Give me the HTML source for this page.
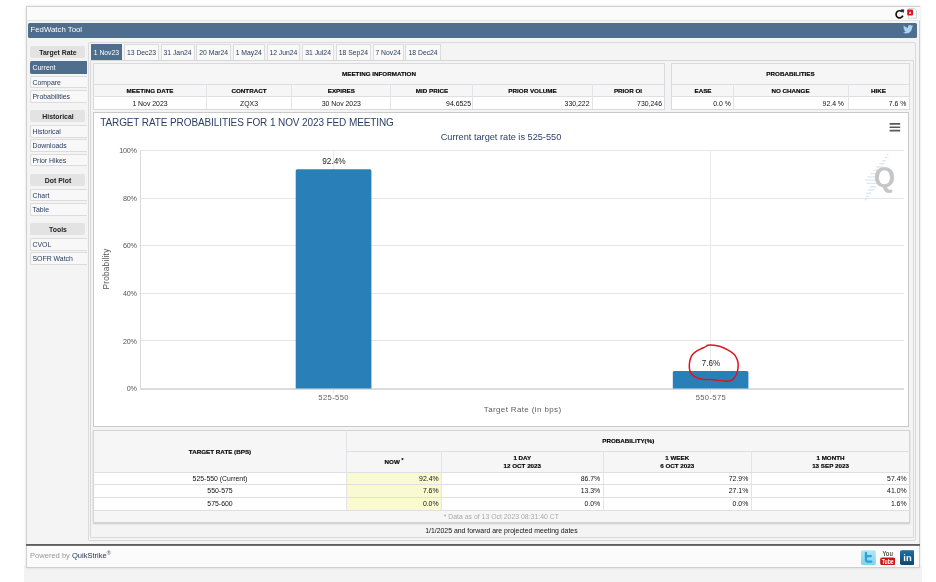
<!DOCTYPE html>
<html><head><meta charset="utf-8">
<style>
*{box-sizing:border-box;margin:0;padding:0}
html,body{width:936px;height:582px;background:#fff;overflow:hidden}
body{position:relative;font-family:"Liberation Sans",sans-serif;color:#222}
.a{position:absolute}
.t{position:absolute;white-space:nowrap;line-height:1}
.c{transform:translateX(-50%)}
.r{transform:translateX(-100%)}
.nh{position:absolute;left:30px;width:55px;height:12px;background:#e3e3e3;border-radius:2px;font-weight:bold;font-size:6.9px;text-align:center;line-height:13px;color:#222;padding-left:1px}
.ni{position:absolute;left:30px;width:57px;height:12.5px;background:#f8f8f8;border:1px solid #dcdcdc;border-right:none;border-radius:2px 0 0 2px;font-size:6.9px;line-height:11.5px;padding-left:1.5px;color:#1f3557}
.ni.on{background:#4f6d8c;border-color:#4f6d8c;color:#fff}
.tab{position:absolute;top:44px;height:15.6px;background:#f9f9f9;border:1px solid #dcdcdc;border-bottom:none;font-size:6.8px;line-height:15.5px;text-align:center;color:#1f3557;white-space:nowrap}
.tab.on{background:#4f6d8c;border-color:#4f6d8c;color:#fff}
.hl{position:absolute;background:#dedee3;height:1px}
.vl{position:absolute;background:#e3e3e8;width:1px}
.th{font-weight:bold;font-size:6.25px;color:#000;-webkit-text-stroke:.15px #000}
.td{font-size:6.9px;color:#111}
.gl{position:absolute;left:140px;width:764px;height:1px;background:#e6e6e6}
.yl{font-size:7.2px;color:#555;letter-spacing:-0.3px}
</style></head><body><div id="w" style="position:absolute;left:0;top:0;width:936px;height:582px;will-change:transform">

<!-- bottom gray area -->
<div class="a" style="left:24px;top:566px;width:897.5px;height:16px;background:#f3f3f3"></div>
<!-- outer frame -->
<div class="a" style="left:26px;top:6px;width:894px;height:562px;background:#f4f4f4;border:1px solid #cfcfcf;box-shadow:0 0 3px rgba(0,0,0,.12)"></div>
<!-- toolbar -->
<div class="a" style="left:27px;top:7px;width:892.5px;height:13.5px;background:#fbfbfb;border-bottom:1px solid #e4e4e4"></div>
<!-- refresh icon -->
<svg class="a" style="left:893px;top:7px" width="14" height="14" viewBox="893 7 14 14"><path d="M901.98 11.66 A3.55 3.55 0 1 0 902.89 15.63" fill="none" stroke="#161616" stroke-width="1.7"/><path d="M901 9.700 L903.900 9.800 L903.300 12.700 Z" fill="#161616" stroke="#161616" stroke-width=".5" stroke-linejoin="round"/></svg>
<!-- pdf icon -->
<svg class="a" style="left:906px;top:7px" width="12" height="13" viewBox="906 7 12 13"><path d="M908.3 8.500 H914.3 L916.5 10.700 V18.200 H908.3 Z" fill="#fdfefe" stroke="#bccccc" stroke-width=".7"/><rect x="907.2" y="9.400" width="5.800" height="6" rx=".8" fill="#dc141c"/><path d="M908.800 13.800 L910.100 11.200 L911.400 13.800 Z" fill="#fff" opacity=".85"/></svg>

<!-- header bar -->
<div class="a" style="left:28px;top:23px;width:889px;height:14.5px;background:#4f6d8c;border-radius:1.5px"></div>
<div class="t" style="left:30.5px;top:26.4px;font-size:7.8px;color:#fff">FedWatch Tool</div>
<!-- twitter bird -->
<svg class="a" style="left:903.2px;top:25.400px" width="10.4" height="8.8" viewBox="0 0 24 20"><path fill="#a9d4f2" d="M23.6 2.4c-.9.4-1.8.6-2.8.8 1-.6 1.800-1.600 2.100-2.700-.9.600-2 1-3.100 1.200C18.900.700 17.700.100 16.300.100c-2.700 0-4.800 2.200-4.800 4.800 0 .4 0 .8.100 1.100C7.600 5.800 4 3.900 1.700 1 1.300 1.700 1 2.500 1 3.400c0 1.700.8 3.200 2.200 4-.800 0-1.500-.200-2.200-.600v.100c0 2.300 1.700 4.300 3.900 4.700-.4.100-.8.200-1.300.2-.3 0-.6 0-.9-.1.600 1.900 2.400 3.300 4.500 3.400-1.700 1.300-3.700 2.100-6 2.100-.4 0-.8 0-1.200-.100 2.100 1.400 4.700 2.200 7.400 2.200 8.900 0 13.700-7.400 13.700-13.700v-.6c1-.7 1.800-1.600 2.500-2.600z"/></svg>

<!-- NAV -->
<div class="nh" style="top:46px">Target Rate</div>
<div class="ni on" style="top:61.3px">Current</div>
<div class="ni" style="top:75.7px">Compare</div>
<div class="ni" style="top:90px">Probabilities</div>
<div class="nh" style="top:110px">Historical</div>
<div class="ni" style="top:125px">Historical</div>
<div class="ni" style="top:139.3px">Downloads</div>
<div class="ni" style="top:153.5px">Prior Hikes</div>
<div class="nh" style="top:173.5px">Dot Plot</div>
<div class="ni" style="top:188.6px">Chart</div>
<div class="ni" style="top:203px">Table</div>
<div class="nh" style="top:223px">Tools</div>
<div class="ni" style="top:238px">CVOL</div>
<div class="ni" style="top:252px">SOFR Watch</div>

<!-- tabs container -->
<div class="a" style="left:87.5px;top:42px;width:828px;height:498.5px;background:#f4f4f4;border:1px solid #dadada;border-radius:2px"></div>
<div class="tab on" style="left:91px;width:30.8px">1 Nov23</div>
<div class="tab" style="left:124.0px;width:35.0px">13 Dec23</div>
<div class="tab" style="left:160.5px;width:34.0px">31 Jan24</div>
<div class="tab" style="left:196.2px;width:35.0px">20 Mar24</div>
<div class="tab" style="left:232.7px;width:32.1px">1 May24</div>
<div class="tab" style="left:266.5px;width:33.8px">12 Jun24</div>
<div class="tab" style="left:302.0px;width:32.2px">31 Jul24</div>
<div class="tab" style="left:336.0px;width:34.8px">18 Sep24</div>
<div class="tab" style="left:372.5px;width:31.1px">7 Nov24</div>
<div class="tab" style="left:405.3px;width:35.6px">18 Dec24</div>
<!-- tab content panel -->
<div class="a" style="left:89.7px;top:59.6px;width:824px;height:478.2px;background:#f4f4f4;border:1px solid #d8d8d8;border-radius:1px"></div>

<!-- TABLE 1 -->
<div class="a" style="left:93px;top:63px;width:572px;height:47px;background:#f6f6f6;border:1px solid #d9d9de"></div>
<div class="a" style="left:94px;top:97px;width:570px;height:12px;background:#fff"></div>
<div class="hl" style="left:93px;top:84px;width:572px"></div>
<div class="hl" style="left:93px;top:96px;width:572px"></div>
<div class="vl" style="left:206px;top:84px;height:25px"></div>
<div class="vl" style="left:291px;top:84px;height:25px"></div>
<div class="vl" style="left:390px;top:84px;height:25px"></div>
<div class="vl" style="left:472px;top:84px;height:25px"></div>
<div class="vl" style="left:592px;top:84px;height:25px"></div>
<div class="t th c" style="left:379px;top:71px">MEETING INFORMATION</div>
<div class="t th c" style="left:150px;top:87.6px">MEETING DATE</div>
<div class="t th c" style="left:249px;top:87.6px">CONTRACT</div>
<div class="t th c" style="left:341.3px;top:87.6px">EXPIRES</div>
<div class="t th c" style="left:432px;top:87.6px">MID PRICE</div>
<div class="t th c" style="left:532.5px;top:87.6px">PRIOR VOLUME</div>
<div class="t th c" style="left:628px;top:87.6px">PRIOR OI</div>
<div class="t td c" style="left:150px;top:100.6px">1 Nov 2023</div>
<div class="t td c" style="left:249px;top:100.6px">ZQX3</div>
<div class="t td c" style="left:341.3px;top:100.6px">30 Nov 2023</div>
<div class="t td r" style="left:471px;top:100.6px">94.6525</div>
<div class="t td r" style="left:589.5px;top:100.6px">330,222</div>
<div class="t td r" style="left:662px;top:100.6px">730,246</div>

<!-- TABLE 2 -->
<div class="a" style="left:671px;top:63px;width:239px;height:47px;background:#f6f6f6;border:1px solid #d9d9de"></div>
<div class="a" style="left:672px;top:97px;width:237px;height:12px;background:#fff"></div>
<div class="hl" style="left:671px;top:84px;width:239px"></div>
<div class="hl" style="left:671px;top:96px;width:239px"></div>
<div class="vl" style="left:733px;top:84px;height:25px"></div>
<div class="vl" style="left:848px;top:84px;height:25px"></div>
<div class="t th c" style="left:790.5px;top:71px">PROBABILITIES</div>
<div class="t th c" style="left:703px;top:87.6px">EASE</div>
<div class="t th c" style="left:790.5px;top:87.6px">NO CHANGE</div>
<div class="t th c" style="left:878.5px;top:87.6px">HIKE</div>
<div class="t td r" style="left:730.8px;top:100.6px">0.0 %</div>
<div class="t td r" style="left:844px;top:100.6px">92.4 %</div>
<div class="t td r" style="left:906.4px;top:100.6px">7.6 %</div>

<!-- CHART BOX -->
<div class="a" style="left:93px;top:112px;width:816px;height:315px;background:#fff;border:1px solid #c9c9c9"></div>
<div id="ctitle" class="t" style="left:100.2px;top:118px;font-size:10px;color:#2a3f66;letter-spacing:-0.104px">TARGET RATE PROBABILITIES FOR 1 NOV 2023 FED MEETING</div>
<div id="csub" class="t c" style="left:501px;top:133px;font-size:9.2px;color:#2a3f66">Current target rate is 525-550</div>
<!-- hamburger -->
<svg class="a" style="left:889px;top:122px" width="12" height="11" viewBox="889 122 12 11"><path d="M889.6 123.9H900.2M889.6 127.2H900.2M889.6 130.6H900.2" stroke="#5a5a5a" stroke-width="1.6"/></svg>
<!-- gridlines -->
<div class="gl" style="top:150px"></div>
<div class="gl" style="top:197.6px"></div>
<div class="gl" style="top:245.2px"></div>
<div class="gl" style="top:292.8px"></div>
<div class="gl" style="top:340.4px"></div>
<div class="a" style="left:710px;top:150px;width:1px;height:243px;background:#e9e9e9"></div>
<div class="a" style="left:333px;top:150px;width:1px;height:243px;background:#e9e9e9"></div>
<div class="a" style="left:140px;top:150px;width:1px;height:239px;background:#d8d8d8"></div>
<div class="a" style="left:140px;top:388px;width:764px;height:2px;background:#dcdcdc"></div>
<!-- y labels -->
<div class="t yl r" style="left:136.5px;top:147.1px">100%</div>
<div class="t yl r" style="left:136.5px;top:194.7px">80%</div>
<div class="t yl r" style="left:136.5px;top:242.3px">60%</div>
<div class="t yl r" style="left:136.5px;top:289.9px">40%</div>
<div class="t yl r" style="left:136.5px;top:337.5px">20%</div>
<div class="t yl r" style="left:136.5px;top:385.1px">0%</div>
<div class="t yl" style="left:107px;top:269.4px;transform:translate(-50%,-50%) rotate(-90deg);font-size:8.2px;letter-spacing:.25px;color:#555">Probability</div>
<!-- bars -->
<svg class="a" style="left:290px;top:160px" width="470" height="232" viewBox="290 160 470 232"><path d="M295.700 388.600V170.700Q295.700 169.200 297.200 169.200H369.900Q371.400 169.200 371.400 170.700V388.600Z" fill="#2980b9"/><path d="M672.800 388.600V372.500Q672.800 371 674.300 371H746.900Q748.400 371 748.400 372.500V388.600Z" fill="#2980b9"/></svg>
<div class="t" style="left:333.5px;top:156.9px;font-size:9.2px;color:#222;transform:translateX(-50%) scaleX(.9)">92.4%</div>
<div class="t" style="left:711px;top:358.7px;font-size:9.2px;color:#222;transform:translateX(-50%) scaleX(.88)">7.6%</div>
<div class="t c yl" style="left:333.6px;top:394.4px;font-size:7.6px;letter-spacing:.37px;color:#606060">525-550</div>
<div class="t c yl" style="left:710.9px;top:394.4px;font-size:7.6px;letter-spacing:.37px;color:#606060">550-575</div>
<div class="t c yl" style="left:522.6px;top:406.2px;font-size:8px;letter-spacing:.37px;color:#606060">Target Rate (in bps)</div>
<!-- Q watermark -->
<svg class="a" style="left:860px;top:150px" width="45" height="55" viewBox="860 150 45 55">
<path d="M886.5 154.5H888.5 M884.5 157.6H887.5 M882 160.7H886 M879.4 163.8H884.6 M876.5 167H883 M873.7 170.4H881 M870.5 173.6H880 M867.1 176.9H879 M864.7 180.1H878 M866.5 183.4H877 M869.6 186.7H876 M868 190H874.5 M866.3 193.2H871.2 M865.5 196.5H869 M864.7 199.7H866.5" stroke="#dbe9f6" stroke-width="1.4" fill="none"/>
<text x="873.8" y="187" font-family="Liberation Sans, sans-serif" font-weight="bold" font-size="29" fill="#c6c6c6" textLength="21.5" lengthAdjust="spacingAndGlyphs">Q</text>
</svg>
<!-- red circle -->
<svg class="a" style="left:680px;top:338px" width="70" height="52" viewBox="680 338 70 52"><path d="M707.700 345.200 C709.500 344.900 715 345.300 718.400 346 C721.500 346.600 728 350 731 351.900 C733.500 353.500 735.300 355.500 735.900 356.800 C737.200 359 738.100 361 738.100 363 C738.300 365.500 738.200 368 737.700 370.200 C737.300 372.500 736.500 375 735.400 376.400 C734.300 378.200 733 380 731 380.500 C729 381.200 727 381.200 724.700 381.100 C722 380.900 720 380.400 717.500 380.200 C715 379.900 712 379.700 709.500 379.600 C707 379.500 704.500 379.500 702.300 379.200 C700 378.800 698 378.300 696.100 377.300 C694 376.300 692.300 375.200 691.200 373.800 C690 372 689.600 370.500 689.400 368.400 C689.200 366 689.300 363.500 689.800 361.200 C690.200 359.200 690.700 357.500 691.600 355.900 C692.700 354 694.200 352.700 696.100 351.400 C698 350 700.200 349.300 702.300 348.300 C703.800 347.600 705 347.200 705.900 346.500 C706.600 346 707 345.400 707.700 345.200 Z" fill="none" stroke="#e0121a" stroke-width="1.5" stroke-linejoin="round"/></svg>

<!-- BOTTOM TABLE -->
<div class="a" style="left:93px;top:430px;width:817px;height:93px;background:#f6f6f6;border:1px solid #d4d4d8;box-shadow:0 1px 1.5px rgba(0,0,0,.18)"></div>
<div class="a" style="left:94px;top:473px;width:815px;height:37px;background:#fff"></div>
<div class="a" style="left:347px;top:473px;width:94px;height:37px;background:#fafad2"></div>
<div class="hl" style="left:346px;top:451px;width:564px"></div>
<div class="hl" style="left:93px;top:472px;width:817px"></div>
<div class="hl" style="left:93px;top:484px;width:817px"></div>
<div class="hl" style="left:93px;top:497px;width:817px"></div>
<div class="hl" style="left:93px;top:509.5px;width:817px"></div>
<div class="vl" style="left:346px;top:430px;height:80px"></div>
<div class="vl" style="left:441px;top:451px;height:59px"></div>
<div class="vl" style="left:603px;top:451px;height:59px"></div>
<div class="vl" style="left:751px;top:451px;height:59px"></div>
<div class="t th c" style="left:220px;top:448.800px">TARGET RATE (BPS)</div>
<div class="t th c" style="left:628.3px;top:438.3px">PROBABILITY(%)</div>
<div class="t th c" style="left:394px;top:458.3px">NOW <span style="font-size:5px;vertical-align:1.5px">*</span></div>
<div class="t th c" style="left:522.3px;top:454.6px">1 DAY</div>
<div class="t th c" style="left:522.3px;top:462.6px">12 OCT 2023</div>
<div class="t th c" style="left:677.200px;top:454.6px">1 WEEK</div>
<div class="t th c" style="left:677.200px;top:462.6px">6 OCT 2023</div>
<div class="t th c" style="left:830.5px;top:454.6px">1 MONTH</div>
<div class="t th c" style="left:830.5px;top:462.6px">13 SEP 2023</div>

<div class="t td c" style="left:220px;top:475.6px">525-550 (Current)</div>
<div class="t td c" style="left:220px;top:488px">550-575</div>
<div class="t td c" style="left:220px;top:500.6px">575-600</div>
<div class="t td r" style="left:438.6px;top:475.6px">92.4%</div>
<div class="t td r" style="left:438.6px;top:488px">7.6%</div>
<div class="t td r" style="left:438.6px;top:500.6px">0.0%</div>
<div class="t td r" style="left:600.2px;top:475.6px">86.7%</div>
<div class="t td r" style="left:600.2px;top:488px">13.3%</div>
<div class="t td r" style="left:600.2px;top:500.6px">0.0%</div>
<div class="t td r" style="left:748.3px;top:475.6px">72.9%</div>
<div class="t td r" style="left:748.3px;top:488px">27.1%</div>
<div class="t td r" style="left:748.3px;top:500.6px">0.0%</div>
<div class="t td r" style="left:906.6px;top:475.6px">57.4%</div>
<div class="t td r" style="left:906.6px;top:488px">41.0%</div>
<div class="t td r" style="left:906.6px;top:500.6px">1.6%</div>
<div class="t td c" style="left:501.3px;top:514px;color:#aaa">* Data as of 13 Oct 2023 08:31:40 CT</div>
<div class="t td c" style="left:501.4px;top:528px">1/1/2025 and forward are projected meeting dates</div>

<!-- FOOTER -->
<div class="a" style="left:27px;top:545px;width:892px;height:22px;background:#fbfbfb"></div>
<div class="a" style="left:26px;top:544px;width:894px;height:2px;background:linear-gradient(#555,#7a7a7a)"></div>
<div class="t" style="left:30px;top:550.8px;font-size:7.55px;color:#999">Powered by <span style="color:#27385c">QuikStrike</span><span style="font-size:5.5px;vertical-align:2.5px;color:#555">®</span></div>
<!-- social icons -->
<svg class="a" style="left:861.4px;top:549.6px" width="14.8" height="15.2" viewBox="0 0 15 15"><defs><linearGradient id="tw" x1="0" y1="0" x2="0" y2="1"><stop offset="0" stop-color="#b4e6f2"/><stop offset="1" stop-color="#7fd3e8"/></linearGradient></defs><rect width="15" height="15" rx="1.500" fill="url(#tw)"/><path d="M5 2.800 V9.500 Q5 11.600 7.200 11.600 H10.300 M5 6 H10" fill="none" stroke="#2aa3dd" stroke-width="2.300" stroke-linecap="round"/></svg>
<svg class="a" style="left:879.8px;top:549.6px" width="15.4" height="15.2" viewBox="0 0 15.400 15.200"><rect width="15.400" height="15.200" fill="#fff"/><text x="7.700" y="6.500" text-anchor="middle" font-family="Liberation Sans, sans-serif" font-weight="bold" font-size="6.800" fill="#555" textLength="10.500" lengthAdjust="spacingAndGlyphs">You</text><rect x="0.200" y="7.500" width="15" height="7.600" rx="1.800" fill="#c4161c"/><text x="7.700" y="13.800" text-anchor="middle" font-family="Liberation Sans, sans-serif" font-weight="bold" font-size="6.800" fill="#fff" textLength="12" lengthAdjust="spacingAndGlyphs">Tube</text></svg>
<svg class="a" style="left:899.5px;top:549.6px" width="14.8" height="15.2" viewBox="0 0 15 15"><defs><linearGradient id="li" x1="0" y1="0" x2="0" y2="1"><stop offset="0" stop-color="#1f6fa3"/><stop offset="1" stop-color="#0d4670"/></linearGradient></defs><rect width="15" height="15" rx="1.800" fill="url(#li)"/><text x="7.500" y="11.300" text-anchor="middle" font-family="Liberation Sans, sans-serif" font-weight="bold" font-size="9.500" fill="#fff">in</text></svg>

</div></body></html>
